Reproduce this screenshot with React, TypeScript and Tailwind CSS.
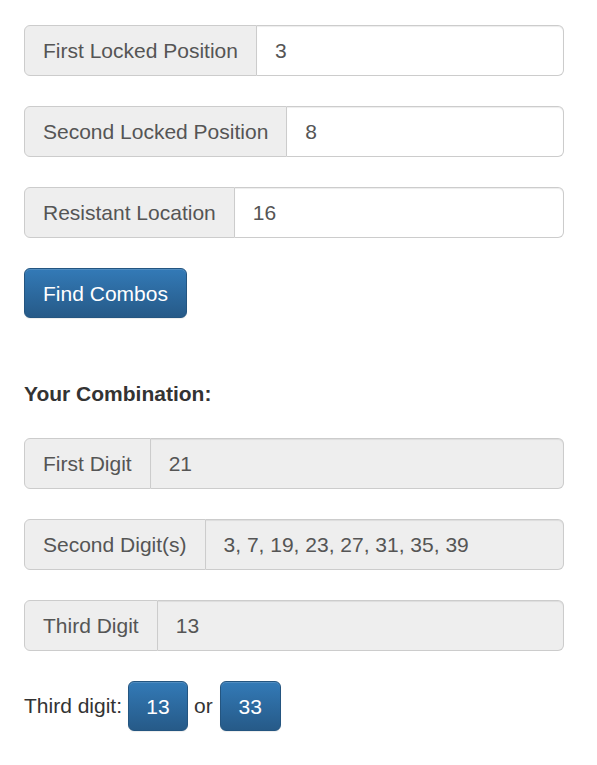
import React from 'react';

const font = { fontFamily: '"Liberation Sans", Arial, sans-serif' };

function Group({ label, value, disabled }: { label: string; value: string; disabled?: boolean }) {
  return (
    <div className="flex h-[51px] w-[540px] text-[21px] text-[#555]">
      <span className="flex items-center whitespace-nowrap rounded-l-[6px] border border-[#ccc] bg-[#eee] px-[18px] pt-[1px]">
        {label}
      </span>
      <div
        className={`flex flex-1 items-center rounded-r-[6px] border border-l-0 border-[#ccc] px-[18px] pt-[1px] shadow-[inset_0_1px_1px_rgba(0,0,0,0.075)] ${
          disabled ? 'bg-[#eee]' : 'bg-white'
        }`}
      >
        {value}
      </div>
    </div>
  );
}

function BlueButton({ children, className }: { children: React.ReactNode; className?: string }) {
  return (
    <button
      className={`flex h-[50px] items-center justify-center rounded-[6px] border border-[#245580] bg-gradient-to-b from-[#337ab7] to-[#265a88] pt-[1px] text-[21px] text-white shadow-[inset_0_1px_0_rgba(255,255,255,0.15),0_1px_1px_rgba(0,0,0,0.075)] ${className ?? ''}`}
    >
      {children}
    </button>
  );
}

export default function App() {
  return (
    <div className="min-h-[765px] bg-white px-6 pt-[25px]" style={font}>
      <div className="flex flex-col gap-[30px]">
        <Group label="First Locked Position" value="3" />
        <Group label="Second Locked Position" value="8" />
        <Group label="Resistant Location" value="16" />
      </div>

      <BlueButton className="mt-[30px] w-[163px]">Find Combos</BlueButton>

      <h3 className="mt-[64px] text-[21px] font-bold leading-[24px] text-[#333]">Your Combination:</h3>

      <div className="mt-[32px] flex flex-col gap-[30px]">
        <Group label="First Digit" value="21" disabled />
        <Group label="Second Digit(s)" value="3, 7, 19, 23, 27, 31, 35, 39" disabled />
        <Group label="Third Digit" value="13" disabled />
      </div>

      <div className="mt-[30px] flex items-center text-[21px] text-[#333]">
        <span>Third digit:</span>
        <BlueButton className="ml-[6px] w-[60px]">13</BlueButton>
        <span className="ml-[6px] mr-[7px]">or</span>
        <BlueButton className="w-[61px]">33</BlueButton>
      </div>
    </div>
  );
}
